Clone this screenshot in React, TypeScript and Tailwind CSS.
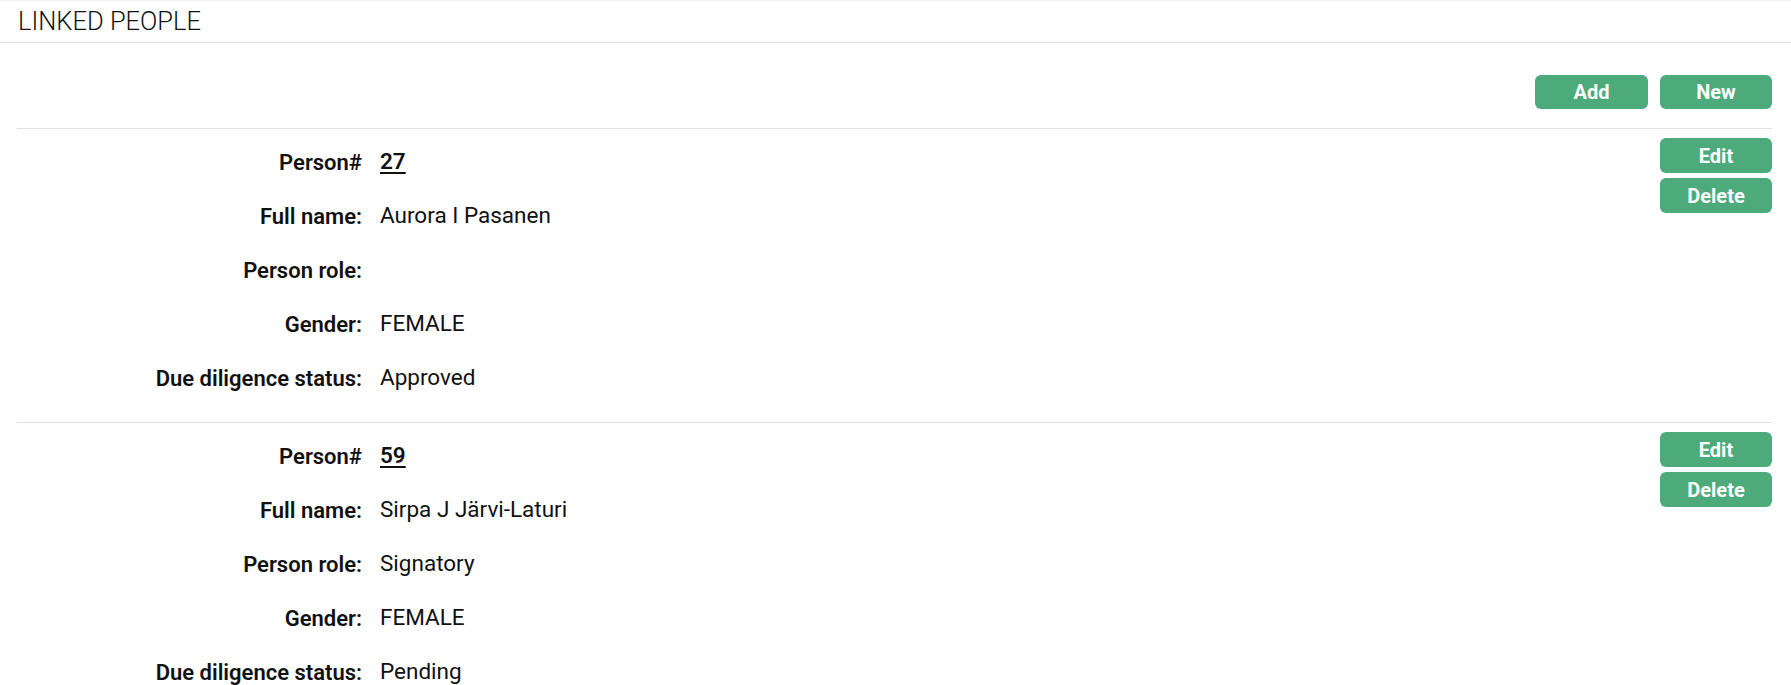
import React from "react";

type Person = {
  id: number;
  fullName: string;
  role: string;
  gender: string;
  dd: string;
};

const people: Person[] = [
  { id: 27, fullName: "Aurora I Pasanen", role: "", gender: "FEMALE", dd: "Approved" },
  { id: 59, fullName: "Sirpa J Järvi-Laturi", role: "Signatory", gender: "FEMALE", dd: "Pending" },
];

function Btn({ children, className = "" }: { children: React.ReactNode; className?: string }) {
  return (
    <button
      className={
        "flex items-center justify-center rounded-[6px] bg-[#4caa7b] text-white font-bold text-[20px] leading-none " +
        className
      }
    >
      {children}
    </button>
  );
}

function Row({ label, children }: { label: string; children?: React.ReactNode }) {
  return (
    <div className="flex h-[54px] items-center">
      <div className="w-[345px] shrink-0 text-right font-semibold text-[22px] text-[#111]">{label}</div>
      <div className="pl-[18px] text-[22.5px] text-[#111]">{children}</div>
    </div>
  );
}

function PersonBlock({ p }: { p: Person }) {
  return (
    <div className="flex border-t border-[#e2e2e2]">
      <div className="flex-1 pt-[6px] pb-[17px]">
        <Row label="Person#">
          <a className="font-semibold underline underline-offset-[3px]" href="#">
            {p.id}
          </a>
        </Row>
        <Row label="Full name:">{p.fullName}</Row>
        <Row label="Person role:">{p.role}</Row>
        <Row label="Gender:">{p.gender}</Row>
        <Row label="Due diligence status:">{p.dd}</Row>
      </div>
      <div className="flex flex-col gap-[5px] pt-[9px]">
        <Btn className="w-[112px] h-[35px]">Edit</Btn>
        <Btn className="w-[112px] h-[35px]">Delete</Btn>
      </div>
    </div>
  );
}

export default function App() {
  return (
    <div className="min-h-screen bg-white border-t border-[#f0f0f0]" style={{ fontFamily: "Roboto, 'Liberation Sans', sans-serif" }}>
      <div className="flex h-[42px] items-center border-b border-[#e0e0e0] px-[18px]">
        <h1 className="text-[25.5px] font-light text-[#111] leading-none">LINKED PEOPLE</h1>
      </div>
      <div className="pl-[17px] pr-[19px]">
        <div className="flex justify-end gap-[12px] pt-[32px] pb-[19px]">
          <Btn className="w-[113px] h-[34px]">Add</Btn>
          <Btn className="w-[112px] h-[34px]">New</Btn>
        </div>
        {people.map((p) => (
          <PersonBlock key={p.id} p={p} />
        ))}
      </div>
    </div>
  );
}
